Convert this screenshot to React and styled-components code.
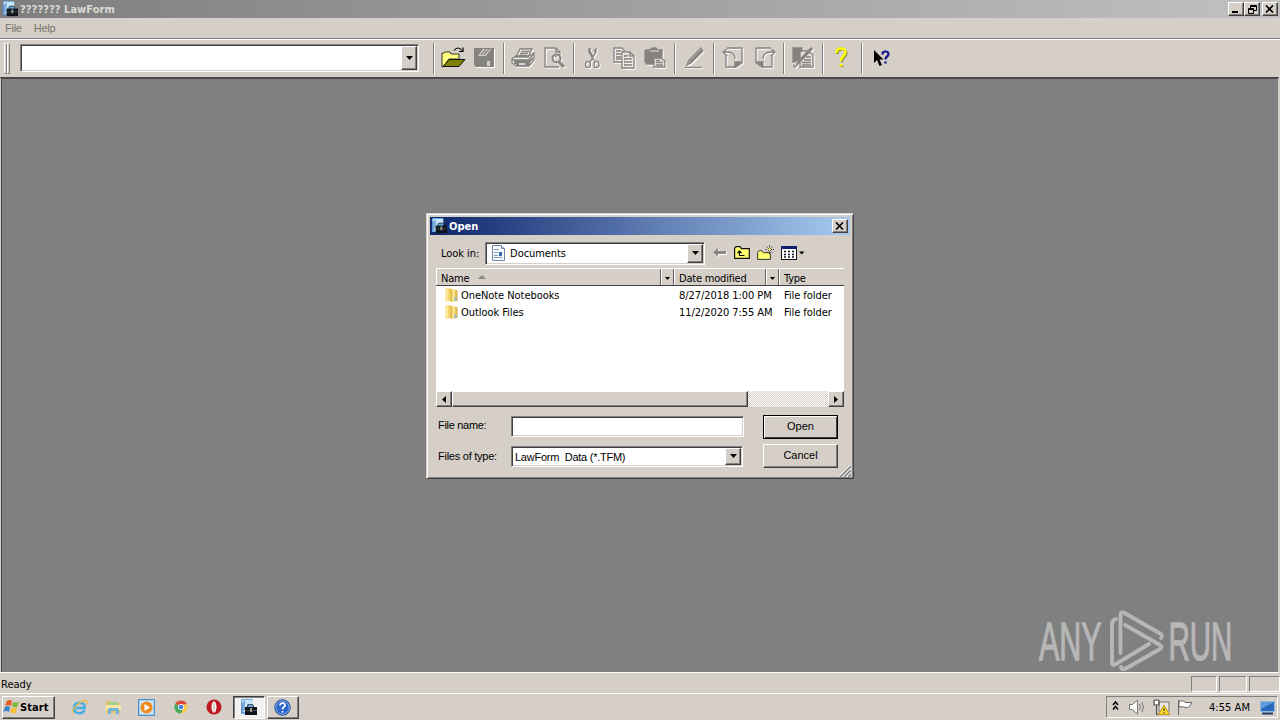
import React from "react";
import styled, { createGlobalStyle, css } from "styled-components";

const GlobalStyle = createGlobalStyle`
  html, body { margin: 0; padding: 0; overflow: hidden; }
  * { box-sizing: border-box; }
  svg { display: block; flex: none; }
`;

const FACE = "#d5cfc8";
const ui = css`
  font-family: "DejaVu Sans Condensed", "DejaVu Sans", sans-serif;
  font-stretch: condensed;
  font-size: 11px;
  letter-spacing: -0.06px;
`;
const raised = css`
  background: ${FACE};
  border: 1px solid;
  border-color: #fff #404040 #404040 #fff;
  box-shadow: inset -1px -1px 0 #808080;
`;

const Desktop = styled.div`
  ${ui}
  position: relative;
  width: 1280px;
  height: 720px;
  display: flex;
  flex-direction: column;
  background: ${FACE};
  color: #000;
  overflow: hidden;
  white-space: pre;
`;
const TitleBar = styled.div`
  height: 18px;
  display: flex;
  align-items: center;
  padding: 0 2px;
  background: linear-gradient(90deg, #7e7e7e, #c1c1c1);
`;
const TitleText = styled.span`
  flex: 1;
  font-weight: bold;
  letter-spacing: 0.05px;
  color: ${(p) => p.$color};
  padding-left: 2px;
`;
const CaptionButton = styled.div`
  ${raised}
  width: 16px;
  height: 14px;
  margin-left: ${(p) => p.$gap || 0}px;
  display: flex;
  align-items: center;
  justify-content: center;
`;
const MenuBar = styled.div`
  height: 21px;
  display: flex;
  gap: 12px;
  padding: 4px 5px 0;
  color: #77736d;
  border-bottom: 1px solid #808080;
  font-family: "Liberation Sans", Arial, sans-serif;
  font-size: 11px;
  letter-spacing: -0.25px;
`;
const Toolbar = styled.div`
  height: 38px;
  display: flex;
  align-items: center;
  border-top: 1px solid #fff;
  padding: 0 0 1px 4px;
`;
const Grip = styled.div`
  width: 3px;
  height: 31px;
  margin-right: ${(p) => p.$gap || 0}px;
  border: 1px solid;
  border-color: #fff #808080 #808080 #fff;
`;
const Combo = styled.div`
  display: flex;
  align-items: center;
  width: ${(p) => p.$w}px;
  height: ${(p) => p.$h}px;
  background: #fff;
  border: 1px solid;
  border-color: #808080 #fff #fff #808080;
  box-shadow: inset 1px 1px 0 #404040, inset -1px -1px 0 ${FACE};
  padding: 1px 1px 1px ${(p) => p.$pad || 3}px;
`;
const ComboValue = styled.span`
  flex: 1;
  padding-top: 1px;
  letter-spacing: ${(p) => p.$spacing || "inherit"};
`;
const DropButton = styled.div`
  ${raised}
  width: ${(p) => p.$w || 16}px;
  align-self: stretch;
  display: flex;
  align-items: center;
  justify-content: center;
`;
const Divider = styled.div`
  width: 2px;
  height: 31px;
  margin: 0 3px;
  background: linear-gradient(90deg, #808080 50%, #fff 50%);
`;
const ToolButton = styled.div`
  width: 31px;
  height: 30px;
  padding: 3px;
`;
const Workspace = styled.div`
  flex: 1;
  margin-right: 1px;
  background: #808080;
  border-top: 2px solid #4a4747;
  border-left: 1px solid ${FACE};
  border-right: 1px solid ${FACE};
  border-bottom: 1px solid #fff;
  box-shadow: inset 1px 0 0 #4a4747;
  display: flex;
  padding: 134px 0 0 425px;
`;
const StatusBar = styled.div`
  height: 20px;
  display: flex;
  align-items: center;
  gap: 2px;
  padding: 2px 0 1px 1px;
`;
const StatusText = styled.span`
  flex: 1;
  padding-top: 1px;
  letter-spacing: 0;
`;
const StatusPane = styled.div`
  width: ${(p) => p.$w}px;
  height: 16px;
  border: 1px solid;
  border-color: #808080 #fff #fff #808080;
`;
const Taskbar = styled.div`
  height: 27px;
  display: flex;
  align-items: center;
  border-top: 1px solid #fff;
  padding: 0 2px;
`;
const StartButton = styled.div`
  ${raised}
  width: 53px;
  height: 23px;
  margin-right: 8px;
  display: flex;
  align-items: center;
  font-weight: bold;
  letter-spacing: 0.1px;
`;
const QuickLaunch = styled.div`
  width: 33.6px;
  display: flex;
  justify-content: center;
`;
const TaskButton = styled.div`
  ${raised}
  width: 32px;
  height: 23px;
  margin-left: 2px;
  display: flex;
  align-items: center;
  justify-content: center;
  ${(p) =>
    p.$active &&
    css`
      background: #f4f2f0;
      border-color: #404040 #fff #fff #404040;
      box-shadow: inset 1px 1px 0 #808080;
    `}
`;
const Tray = styled.div`
  width: 172px;
  height: 22px;
  margin-left: auto;
  border: 1px solid;
  border-color: #808080 #fff #fff #808080;
  display: flex;
  align-items: center;
  padding-left: 5px;
`;
const Clock = styled.span`
  width: 41px;
  margin: 0 10px 0 8px;
  letter-spacing: 0.05px;
`;

const Dialog = styled.div`
  position: relative;
  width: 428px;
  height: 266px;
  background: ${FACE};
  border: 1px solid;
  border-color: ${FACE} #404040 #404040 ${FACE};
  box-shadow: inset 1px 1px 0 #fff, inset -1px -1px 0 #808080;
  padding: 3px;
`;
const DialogTitle = styled.div`
  height: 18px;
  display: flex;
  align-items: center;
  padding: 0 2px 0 1px;
  background: linear-gradient(90deg, #0d266c, #a6caf0);
`;
const LookRow = styled.div`
  height: 24px;
  margin-top: 6px;
  display: flex;
  align-items: center;
  padding-left: 11px;
`;
const LookLabel = styled.span`
  width: 44px;
`;
const DialogTools = styled.div`
  display: flex;
  align-items: center;
  gap: 7px;
  margin-left: 8px;
`;
const FileList = styled.div`
  margin: 3px 6px 0;
  height: 139px;
  background: #fff;
  display: flex;
  flex-direction: column;
`;
const HeaderRow = styled.div`
  height: 18px;
  display: flex;
  background: ${FACE};
  border-top: 1px solid #fff;
  border-bottom: 1px solid #404040;
`;
const HeaderCell = styled.div`
  width: ${(p) => p.$w}px;
  display: flex;
  align-items: center;
  padding: 2px 0 0 ${(p) => (p.$drop ? 3 : 4)}px;
  letter-spacing: -0.2px;
  border-left: 1px solid #fff;
  border-right: ${(p) => (p.$last ? "0" : "1px solid #606060")};
`;
const SortMark = styled.span`
  margin: -2px 0 0 9px;
`;
const FileRow = styled.div`
  height: 17px;
  display: flex;
  align-items: center;
  padding: 1px 0 0 8px;
`;
const FileName = styled.span`
  width: 219px;
  padding-left: 1px;
`;
const FileDate = styled.span`
  width: 105px;
`;
const ScrollBar = styled.div`
  height: 16px;
  margin-top: auto;
  display: flex;
  background: repeating-conic-gradient(#fff 0 25%, #d5cfc8 0 50%) 0 0 / 2px 2px;
`;
const ScrollButton = styled.div`
  ${raised}
  width: 16px;
  display: flex;
  align-items: center;
  justify-content: center;
`;
const Thumb = styled.div`
  ${raised}
  width: 296px;
  margin-right: auto;
`;
const Form = styled.div`
  display: flex;
  margin: 8px 0 0 8px;
  font-family: "Liberation Sans", Arial, sans-serif;
  letter-spacing: 0;
`;
const Fields = styled.div`
  width: 325px;
  display: flex;
  flex-direction: column;
  gap: 8px;
`;
const FieldRow = styled.div`
  display: flex;
  align-items: center;
  height: 22px;
`;
const FieldLabel = styled.label`
  width: 73px;
  padding-bottom: ${(p) => p.$lift || 0}px;
  letter-spacing: ${(p) => p.$spacing || "0"};
`;
const Buttons = styled.div`
  display: flex;
  flex-direction: column;
  gap: 5px;
`;
const PushButton = styled.div`
  ${raised}
  width: 75px;
  height: 24px;
  display: flex;
  align-items: center;
  justify-content: center;
  padding-bottom: 3px;
  ${(p) =>
    p.$default &&
    css`
      border-color: #000;
      box-shadow: inset 1px 1px 0 #fff, inset -1px -1px 0 #404040;
    `}
`;
const ResizeGrip = styled.div`
  position: absolute;
  right: 2px;
  bottom: 1px;
`;
const Watermark = styled.div`
  position: absolute;
  left: 1036px;
  top: 608px;
`;

const Arrow = ({ dir = "down", w = 7 }) => {
  const h = (w + 1) / 2;
  if (dir === "down")
    return (
      <svg width={w} height={h}>
        <path d={`M0 0H${w}L${w / 2} ${h}Z`} />
      </svg>
    );
  return (
    <svg width={h} height={w}>
      <path d={dir === "left" ? `M${h} 0V${w}L0 ${w / 2}Z` : `M0 0V${w}L${h} ${w / 2}Z`} />
    </svg>
  );
};

const CloseGlyph = () => (
  <svg width="10" height="8">
    <path d="M1 0.5L8 7.5M8 0.5L1 7.5" stroke="#000" strokeWidth="1.6" />
  </svg>
);

const Etched = ({ children }) => (
  <svg width="24" height="24" strokeWidth="1.3">
    <g transform="translate(1 1)" color="#fff" fill="none" stroke="#fff">{children}</g>
    <g color="#858380" fill="none" stroke="#858380">{children}</g>
  </svg>
);

const AppIcon = ({ size = 17 }) => (
  <svg width={size} height={size} viewBox="0 0 17 17">
    <rect x="1" y="0" width="12" height="15" rx="1" fill="#6aa9dd" />
    <path d="M2 1h11v4H7v8H2z" fill="#c6e7f7" />
    <path d="M1 5l4-4v10l-4 3z" fill="#4b7fc7" opacity=".6" />
    <path d="M7.500 8V7q0-1.500 2-1.500h2q2 0 2 1.500v1" fill="none" stroke="#3c4650" />
    <rect x="5" y="8" width="12" height="8" fill="#10151c" />
    <path d="M5 11.500h12" stroke="#39434c" />
    <rect x="10" y="9" width="2" height="4" fill="#9b9e91" />
  </svg>
);

const Folder = () => (
  <svg width="16" height="16">
    <path d="M1 2l6-1v13l-5 .5-1-1z" fill="#f3d66f" />
    <path d="M1 2l3 1v12l-3-1z" fill="#fbeaa0" />
    <path d="M7 2l6 1v11l-6 1z" fill="#e8c34f" />
    <path d="M8 3l3-.5V14l-3 .8z" fill="#f9e28b" />
    <path d="M13 3.500V14M7 2v12" stroke="#cfa43a" strokeWidth=".8" />
    <path d="M10.500 10l2 0v4l-2 .3z" fill="#96b8c5" />
  </svg>
);

const OpenIcon = () => (
  <svg width="25" height="24">
    <path d="M1 21V7h2l1-1h5l1 2h8v5H8L2 21z" fill="#ffff80" stroke="#222" strokeWidth=".9" />
    <path d="M2 20.500l6-7h16l-6 7z" fill="#808000" stroke="#111" />
    <path d="M13 4.500q4-5 8 0M22 1.500v4h-4" fill="none" stroke="#000" strokeWidth="1.200" />
  </svg>
);
const SaveIcon = () => (
  <Etched>
    <path d="M2 2h20v19H4l-2-2z" fill="currentColor" stroke="none" />
    <path d="M6 10L11 3h8l-5 7zM15 15h3v5h-3z" fill="#d5d1cb" stroke="none" />
    <path d="M9 9l5-6M12 9l5-6" />
  </Etched>
);
const PrintIcon = () => (
  <Etched>
    <path d="M5 11L9 3h12l-4 8zM10 5.500h9M9 7.500h8M8 9.500h8" />
    <path d="M1 13l4-3h13l5-3v7l-5 6H5l-4-3zM1 14h16l5-5M17 14v5" />
    <path d="M3 17h14l5-5M5 19h13v-4H3" strokeWidth="1.800" />
    <path d="M8 18h6" stroke="#fff" />
  </Etched>
);
const PreviewIcon = () => (
  <Etched>
    <path d="M17 21H3V2h11l4 4v3M14 2v4h4" />
    <circle cx="14.500" cy="12.500" r="4" strokeWidth="2" />
    <path d="M17 16l5 5" strokeWidth="3" />
    <path d="M13 11l2-1" />
  </Etched>
);
const CutIcon = () => (
  <Etched>
    <path d="M8 2v4l6 10M15 2v4L9 16M9 2v3l3 6M14 3v3" />
    <ellipse cx="7" cy="18.500" rx="2.500" ry="3.200" />
    <ellipse cx="15.500" cy="18.500" rx="2.500" ry="3.200" />
  </Etched>
);
const CopyIcon = () => (
  <Etched>
    <path d="M10 16H2V2h8l3 3" />
    <path d="M4 5h5M4 8h5M4 11h5M4 13h5" />
    <path d="M10 6h8l4 4v12H10zM18 6v4h4M12 10h4M12 13h8M12 16h8M12 19h8" />
  </Etched>
);
const PasteIcon = () => (
  <Etched>
    <path d="M3 4h4l2-2h4l2 2h4v8h-8v6H4l-2-2V5z" fill="currentColor" />
    <path d="M7 5h9" stroke="#d5cfc8" />
    <path d="M11 12h7l4 3v6H11z" fill="#e2dfda" />
    <path d="M13 14.500h4M13 16.500h7M13 19h7" />
  </Etched>
);
const PenIcon = () => (
  <Etched>
    <path d="M5 19l2-5L19 2l2 3L9 17zM7 14l3 2M5 19l5-4" />
    <path d="M9 15L20 4" strokeWidth="2.300" />
    <path d="M3 21.500h17" />
  </Etched>
);
const RotateIcon = ({ right }) => (
  <Etched>
    <g transform={right ? "translate(25 0) scale(-1 1)" : undefined}>
      <path d="M5 9v12h10l6-4V2H6" />
      <path d="M14 21v-5h6z" fill="currentColor" />
      <path d="M14 13q0-7-8-7H3M6 3L2 6l4 4" />
    </g>
  </Etched>
);
const FormIcon = () => (
  <Etched>
    <path d="M2 2h9v14H2z" fill="currentColor" />
    <path d="M9 5h8l5 4v12H9z" fill="#e2dfda" />
    <path d="M15 11h5M13 14h7M11 16.500h9M11 19h9" />
    <path d="M3 21L21 2" strokeWidth="3" />
    <path d="M4 20l2-5" stroke="#d5cfc8" />
  </Etched>
);
const HelpIcon = () => (
  <svg width="24" height="24" fill="none">
    <g transform="translate(1 1)" stroke="#85853c" strokeWidth="2.200">
      <path d="M6.500 7V6q.5-3.500 4.500-3.500T15.500 6q0 2.500-2.500 4.500-2 1.500-2 4.500M9.800 19h2.400" />
    </g>
    <path d="M6.500 7V6q.5-3.500 4.500-3.500T15.500 6q0 2.500-2.500 4.500-2 1.500-2 4.500M9.500 19h3" stroke="#ffff00" strokeWidth="2.400" />
  </svg>
);
const PointerHelpIcon = () => (
  <svg width="24" height="24">
    <path d="M5 4v13l3-3 2.500 6 2.500-1-2.500-5.500h4z" fill="#000" />
    <path d="M13.500 8.500V8q0-2.500 3-2.500t3 2.500q0 1.500-1.500 2.500-1.500.8-1.500 3M15.300 16.500h2.400" fill="none" stroke="#12128b" strokeWidth="2.200" />
  </svg>
);

const DocIcon = () => (
  <svg width="16" height="16">
    <path d="M1.500.5h9l3 3v12h-12z" fill="#f7fafd" stroke="#7187a8" />
    <path d="M10.500.5v3h3" fill="#cbd9e8" stroke="#7187a8" />
    <path d="M3 4.500h5M3 7.500h4M3 10.500h4M3 12.500h8" stroke="#7f9cbe" />
    <rect x="8" y="7" width="3" height="4" fill="#316cac" />
  </svg>
);
const UpFolder = () => (
  <svg width="16" height="14">
    <path d="M.6 12.400V2.500L2 .7h4l1.500 2h7.800v9.700z" fill="#ffff70" stroke="#111" strokeWidth="1.200" />
    <path d="M5.500 5.500v4h5M3.500 7l2-2 2 2" fill="none" stroke="#000" strokeWidth="1.200" />
  </svg>
);
const NewFolder = () => (
  <svg width="17" height="16">
    <path d="M.6 14.400V7.500L2 5.700h3l1.500 2h6.800v6.700z" fill="#ffff70" stroke="#333" />
    <path d="M12.500 0v9M8.500 4.500H17M9.500 1.500l6 6M15.500 1.500l-6 6" stroke="#333" strokeDasharray="1.500 1" />
    <path d="M11 4.500h3M12.500 3v3" stroke="#ffff70" />
  </svg>
);
const ViewIcon = () => (
  <svg width="24" height="14">
    <rect x=".5" y=".5" width="15" height="13" fill="#fff" stroke="#111" />
    <path d="M0 1.500h16" stroke="#0c1e70" strokeWidth="3" />
    <path d="M3 5.500h2M7 5.500h2M11 5.500h2M3 8.500h2M7 8.500h2M11 8.500h2M3 11h2M7 11h2M11 11h2" stroke="#112" strokeWidth="1.300" />
    <path d="M18 5.500h5.500L20.750 8.500z" />
  </svg>
);
const BackIcon = () => (
  <svg width="14" height="10">
    <path d="M6 1v3h8v3H6v3L0 5.500z" fill="#fff" />
    <path d="M5 0v3h8v3H5v3L0 4.500z" fill="#8a8784" />
  </svg>
);

const WinFlag = () => (
  <svg width="17" height="17">
    <path d="M4 2q3-2 5 0L8 7Q5 5 2 7z" fill="#e85b27" />
    <path d="M10 3q3 1 6 0l-2 5q-3 1-5-1z" fill="#7fb739" />
    <path d="M2 8q3-2 5 0l-1 5q-3-2-6 0z" fill="#3b85cc" />
    <path d="M8.500 8.500q3 1.500 5.500 0L12.500 14q-3 1-5-1z" fill="#f6c02e" />
  </svg>
);
const IeIcon = () => (
  <svg width="17" height="17">
    <path d="M13.500 11q-1.500 3.300-5 3.300Q3 14 3 9t5.500-5.300Q14 4 13.700 9H5" fill="none" stroke="#46aee6" strokeWidth="2.600" />
    <path d="M2 15.500Q-1 12 6 6T15.500 2q1 1-.5 3.500" fill="none" stroke="#e8bd45" strokeWidth="1.300" />
  </svg>
);
const ExplorerIcon = () => (
  <svg width="17" height="16">
    <path d="M1 2h5l1 2h8v10H1z" fill="#e6c664" />
    <path d="M3 3h10v3H3z" fill="#a6d08d" />
    <path d="M1 6h15v5H1z" fill="#f8e7a4" />
    <path d="M3 15v-4q0-2 2-2h7q2 0 2 2v4h-3v-3H6v3z" fill="#6db3de" />
  </svg>
);
const MediaIcon = () => (
  <svg width="17" height="17">
    <rect x=".5" y=".5" width="16" height="16" fill="#9fcbe9" stroke="#4b94cb" />
    <rect x="2" y="2" width="13" height="13" fill="#d6e9f4" />
    <circle cx="8.500" cy="8.500" r="6" fill="#f08a1d" />
    <path d="M6.500 5l5.500 3.500L6.500 12z" fill="#fff" />
  </svg>
);
const ChromeIcon = () => (
  <svg width="14" height="14" viewBox="0 0 16 16">
    <path d="M8 8L1.500 4.200A7.500 7.500 0 0 1 14.500 4.200z" fill="#df4a3c" />
    <path d="M8 8L1.500 4.200A7.500 7.500 0 0 0 8 15.500L11 9z" fill="#45a65a" />
    <path d="M8 5h6.900A7.500 7.500 0 0 1 8 15.500L11 9z" fill="#f4cb42" />
    <circle cx="8" cy="8" r="3.500" fill="#fff" />
    <circle cx="8" cy="8" r="2.700" fill="#4a83dc" />
  </svg>
);
const OperaIcon = () => (
  <svg width="16" height="16">
    <circle cx="8" cy="8" r="7.500" fill="#bd1720" />
    <ellipse cx="8" cy="8" rx="2.500" ry="5.800" fill="#fff" />
    <ellipse cx="8" cy="8" rx="1.200" ry="5" fill="#d8cfcb" />
  </svg>
);
const HelpBall = () => (
  <svg width="17" height="17">
    <circle cx="8.500" cy="8.500" r="7.700" fill="#2b67cd" stroke="#153d8f" />
    <circle cx="8.500" cy="8.500" r="6.700" fill="none" stroke="#a2c3ee" strokeWidth=".8" />
    <path d="M6 6.500Q6 4.200 8.500 4.200T11 6.500Q11 7.500 9.500 8.300 8.500 9 8.500 10.500M8.500 12v1.500" fill="none" stroke="#fff" strokeWidth="1.700" />
  </svg>
);
const TrayIcons = () => (
  <svg width="89" height="18">
    <path d="M1 7l2.500-3L6 7M1 11.500l2.500-3 2.500 3" fill="none" stroke="#000" strokeWidth="1.500" />
    <g fill="#fff" stroke="#777">
      <path d="M17.500 6.500h3l5-4.500v14l-5-4.500h-3z" />
      <path d="M27.500 6q2 3 0 6M30 4q3 5 0 10" fill="none" />
    </g>
    <rect x="47" y="4" width="10" height="9" fill="#e8e8e5" stroke="#777" />
    <path d="M42 2v5h5V2M44.500 7v10M42 2h5M44 16h6" fill="none" stroke="#555" strokeWidth="1.200" />
    <path d="M43 3h3v3h-3z" fill="#fff" />
    <path d="M52 7l5.500 9.500h-11z" fill="#f9da2f" stroke="#bc9712" />
    <path d="M52 10v3M52 14v1.300" stroke="#222" />
    <path d="M66.500 2v15M67 3q4-1 7 1.500h6q-1.500 3-4.500 5.500-4-2-8.500-1z" fill="#fff" stroke="#666" />
  </svg>
);
const ShowDesktop = () => (
  <svg width="15" height="15">
    <rect x=".5" y="1.500" width="14" height="10" fill="#2868bd" stroke="#96b8d9" />
    <path d="M1 2h13L1 9z" fill="#5d9add" />
    <path d="M2 13.500h11" stroke="#183b6d" strokeWidth="2" />
  </svg>
);

const Logo = () => (
  <svg width="210" height="68" fill="#b7b7b7" stroke="#b7b7b7">
    <g fontFamily="'Liberation Sans', Arial, sans-serif" fontSize="53" letterSpacing="0" strokeWidth="1.300">
      <text transform="translate(3 51.500) scale(.575 1)">ANY</text>
      <text transform="translate(132.500 51.500) scale(.557 1)">RUN</text>
    </g>
    <g fill="none" strokeWidth="3.800" strokeLinejoin="round" strokeLinecap="round">
      <path d="M80 11q-4 1-4 5v39q0 3 3 1.500L113 36" />
      <path d="M84.500 45V7q0-4 4-2L125 26q2 2 0 4" />
      <path d="M89 17l35 20q3 2 0 4L89 61q-4 1-4-2" />
    </g>
  </svg>
);

const TOOL_GROUPS = [
  [OpenIcon, SaveIcon],
  [PrintIcon, PreviewIcon],
  [CutIcon, CopyIcon, PasteIcon],
  [PenIcon],
  [RotateIcon, () => <RotateIcon right />],
  [FormIcon],
  [HelpIcon],
  [PointerHelpIcon],
];
const FILES = [
  { name: "OneNote Notebooks", date: "8/27/2018 1:00 PM" },
  { name: "Outlook Files", date: "11/2/2020 7:55 AM" },
];
const LAUNCHERS = [IeIcon, ExplorerIcon, MediaIcon, ChromeIcon, OperaIcon];

const OpenDialog = () => (
  <Dialog>
    <DialogTitle>
      <AppIcon size={16} />
      <TitleText $color="#fff">Open</TitleText>
      <CaptionButton><CloseGlyph /></CaptionButton>
    </DialogTitle>
    <LookRow>
      <LookLabel>Look in:</LookLabel>
      <Combo $w={220} $h={23} $pad={5}>
        <DocIcon />
        <ComboValue>{" Documents"}</ComboValue>
        <DropButton><Arrow /></DropButton>
      </Combo>
      <DialogTools>
        <BackIcon />
        <UpFolder />
        <NewFolder />
        <ViewIcon />
      </DialogTools>
    </LookRow>
    <FileList>
      <HeaderRow>
        <HeaderCell $w={225}>
          Name
          <SortMark>
            <svg width="8" height="4"><path d="M0 4L4 0l4 4z" fill="#8a8784" /></svg>
          </SortMark>
        </HeaderCell>
        <HeaderCell $w={13} $drop><Arrow w={5} /></HeaderCell>
        <HeaderCell $w={92}>Date modified</HeaderCell>
        <HeaderCell $w={13} $drop><Arrow w={5} /></HeaderCell>
        <HeaderCell $w={65} $last>Type</HeaderCell>
      </HeaderRow>
      {FILES.map((f) => (
        <FileRow key={f.name}>
          <Folder />
          <FileName>{f.name}</FileName>
          <FileDate>{f.date}</FileDate>
          <span>File folder</span>
        </FileRow>
      ))}
      <ScrollBar>
        <ScrollButton><Arrow dir="left" /></ScrollButton>
        <Thumb />
        <ScrollButton><Arrow dir="right" /></ScrollButton>
      </ScrollBar>
    </FileList>
    <Form>
      <Fields>
        <FieldRow>
          <FieldLabel $lift={2} $spacing="-0.3px">File name:</FieldLabel>
          <Combo $w={233} $h={21} />
        </FieldRow>
        <FieldRow>
          <FieldLabel $spacing="-0.25px">Files of type:</FieldLabel>
          <Combo $w={232} $h={21}>
            <ComboValue $spacing="-0.25px">{"LawForm  Data (*.TFM)"}</ComboValue>
            <DropButton><Arrow /></DropButton>
          </Combo>
        </FieldRow>
      </Fields>
      <Buttons>
        <PushButton $default>Open</PushButton>
        <PushButton>Cancel</PushButton>
      </Buttons>
    </Form>
    <ResizeGrip>
      <svg width="12" height="12" strokeWidth="1.500">
        <path d="M0 12L12 0M4 12l8-8M8 12l4-4" stroke="#fff" />
        <path d="M1 12L12 1M5 12l7-7M9 12l3-3" stroke="#808080" />
      </svg>
    </ResizeGrip>
  </Dialog>
);

export default function App() {
  return (
    <>
      <GlobalStyle />
      <Desktop>
        <TitleBar>
          <AppIcon size={16} />
          <TitleText $color="#dcd9d4">??????? LawForm</TitleText>
          <CaptionButton>
            <svg width="9" height="8"><path d="M0 6h6v2H0z" /></svg>
          </CaptionButton>
          <CaptionButton>
            <svg width="9" height="9" fill="none" stroke="#000">
              <path d="M2.500 3V.5h6v5H6M2.500 1.500h6" />
              <path d="M.5 3.500h5v5h-5zM.5 4.500h5" />
            </svg>
          </CaptionButton>
          <CaptionButton $gap={2}><CloseGlyph /></CaptionButton>
        </TitleBar>
        <MenuBar>
          <span>File</span>
          <span>Help</span>
        </MenuBar>
        <Toolbar>
          <Grip />
          <Grip $gap={10} />
          <Combo $w={399} $h={28}>
            <ComboValue />
            <DropButton><Arrow /></DropButton>
          </Combo>
          <svg width="11" height="1" />
          {TOOL_GROUPS.map((group, i) => (
            <React.Fragment key={i}>
              <Divider />
              {group.map((Icon, j) => (
                <ToolButton key={j}><Icon /></ToolButton>
              ))}
            </React.Fragment>
          ))}
        </Toolbar>
        <Workspace>
          <OpenDialog />
        </Workspace>
        <StatusBar>
          <StatusText>Ready</StatusText>
          <StatusPane $w={26} />
          <StatusPane $w={28} />
          <StatusPane $w={31} />
        </StatusBar>
        <Taskbar>
          <StartButton><WinFlag />Start</StartButton>
          {LAUNCHERS.map((Icon, i) => (
            <QuickLaunch key={i}><Icon /></QuickLaunch>
          ))}
          <TaskButton $active><AppIcon /></TaskButton>
          <TaskButton><HelpBall /></TaskButton>
          <Tray>
            <TrayIcons />
            <Clock>4:55 AM</Clock>
            <ShowDesktop />
          </Tray>
        </Taskbar>
        <Watermark><Logo /></Watermark>
      </Desktop>
    </>
  );
}
